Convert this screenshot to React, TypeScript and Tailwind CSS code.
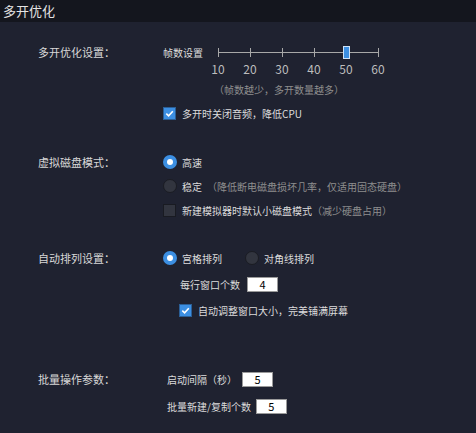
import React from "react";

const font = { fontFamily: '"Noto Sans CJK SC", "Noto Sans", sans-serif' };

function Check({ checked }: { checked: boolean }) {
  return checked ? (
    <div className="w-[13px] h-[13px] bg-[#3c8fe2] border border-[#2b5f96] flex items-center justify-center shrink-0">
      <svg width="9" height="9" viewBox="0 0 9 9">
        <path d="M1.3 4.6 L3.6 6.8 L7.8 2.2" fill="none" stroke="#ffffff" strokeWidth="1.6" />
      </svg>
    </div>
  ) : (
    <div className="w-[13px] h-[13px] bg-[#32353f] border border-[#191b22] shrink-0" />
  );
}

function Radio({ checked }: { checked: boolean }) {
  return checked ? (
    <div className="w-[14px] h-[14px] rounded-full bg-[#3c8fe2] flex items-center justify-center shrink-0">
      <div className="w-[6px] h-[6px] rounded-full bg-white" />
    </div>
  ) : (
    <div className="w-[14px] h-[14px] rounded-full bg-[#32353f] border border-[#1a1c23] shrink-0" />
  );
}

function Box({ v }: { v: string }) {
  return (
    <div className="w-[31px] h-[15px] bg-white border border-[#9a9a9a] text-black text-[11px] leading-none flex items-center justify-center">
      {v}
    </div>
  );
}

export default function App() {
  const ticks = [10, 20, 30, 40, 50, 60];
  return (
    <div style={font} className="w-[476px] h-[433px] bg-[#1f2230] text-[#dcdcdc] overflow-hidden">
      <div className="h-[22px] bg-[#14161e] flex items-center pl-[3px] text-[13px] text-[#e4e4e4]">多开优化</div>

      <div className="pl-[38px]">
        {/* section 1 */}
        <div className="flex mt-[20px]">
          <div className="w-[125px] h-[20px] flex items-center text-[11px] text-[#d8d8d8]">多开优化设置：</div>
          <div className="flex flex-col">
            <div className="h-[20px] flex items-center">
              <span className="text-[10px] w-[50px]">帧数设置</span>
              <div className="relative w-[161px] h-[20px] ml-[5px]">
                <div className="absolute left-0 right-0 top-[10px] h-px bg-[#a8a8a8]" />
                {ticks.map((t, i) => (
                  <div key={t} className="absolute top-[6px] w-px h-[9px] bg-[#a8a8a8]" style={{ left: i * 32 }} />
                ))}
                <div className="absolute left-[125px] top-[4px] w-[7px] h-[13px] bg-[#3c8fe2] border border-[#cfe2f7]" />
              </div>
            </div>
            <div className="h-[14px] relative ml-[55px]">
              {ticks.map((t, i) => (
                <span
                  key={t}
                  className="absolute top-0 w-[24px] -ml-[12px] text-center text-[12px] leading-[14px] text-[#bdbdbd]"
                  style={{ left: i * 32 }}
                >
                  {t}
                </span>
              ))}
            </div>
            <div className="h-[16px] mt-[5px] ml-[51px] flex items-center text-[10px] text-[#8e8e8e]">（帧数越少，多开数量越多）</div>
            <div className="h-[16px] mt-[8px] flex items-center gap-[6px] text-[10px]">
              <Check checked />
              <span>多开时关闭音频，降低CPU</span>
            </div>
          </div>
        </div>

        {/* section 2 */}
        <div className="flex mt-[29px]">
          <div className="w-[125px] h-[24px] flex items-center text-[11px] text-[#d8d8d8]">虚拟磁盘模式：</div>
          <div className="flex flex-col text-[10px]">
            <div className="h-[24px] flex items-center gap-[5px]">
              <Radio checked />
              <span>高速</span>
            </div>
            <div className="h-[24px] flex items-center gap-[5px]">
              <Radio checked={false} />
              <span>稳定</span>
              <span className="text-[#8e8e8e]">（降低断电磁盘损坏几率，仅适用固态硬盘）</span>
            </div>
            <div className="h-[24px] flex items-center gap-[6px]">
              <Check checked={false} />
              <span>
                新建模拟器时默认小磁盘模式<span className="text-[#8e8e8e]">（减少硬盘占用）</span>
              </span>
            </div>
          </div>
        </div>

        {/* section 3 */}
        <div className="flex mt-[23px]">
          <div className="w-[125px] h-[26px] flex items-center text-[11px] text-[#d8d8d8]">自动排列设置：</div>
          <div className="flex flex-col text-[10px]">
            <div className="h-[26px] flex items-center">
              <Radio checked />
              <span className="ml-[5px] w-[63px]">宫格排列</span>
              <Radio checked={false} />
              <span className="ml-[5px]">对角线排列</span>
            </div>
            <div className="h-[26px] flex items-center pl-[17px] gap-[7px]">
              <span>每行窗口个数</span>
              <Box v="4" />
            </div>
            <div className="h-[26px] flex items-center pl-[16px] gap-[6px]">
              <Check checked />
              <span>自动调整窗口大小，完美铺满屏幕</span>
            </div>
          </div>
        </div>

        {/* section 4 */}
        <div className="flex mt-[43px]">
          <div className="w-[125px] h-[27px] flex items-center text-[11px] text-[#d8d8d8]">批量操作参数：</div>
          <div className="flex flex-col text-[10px] pl-[4px]">
            <div className="h-[27px] flex items-center gap-[5px]">
              <span>启动间隔（秒）</span>
              <Box v="5" />
            </div>
            <div className="h-[27px] flex items-center gap-[5px]">
              <span>批量新建/复制个数</span>
              <Box v="5" />
            </div>
          </div>
        </div>
      </div>
    </div>
  );
}
